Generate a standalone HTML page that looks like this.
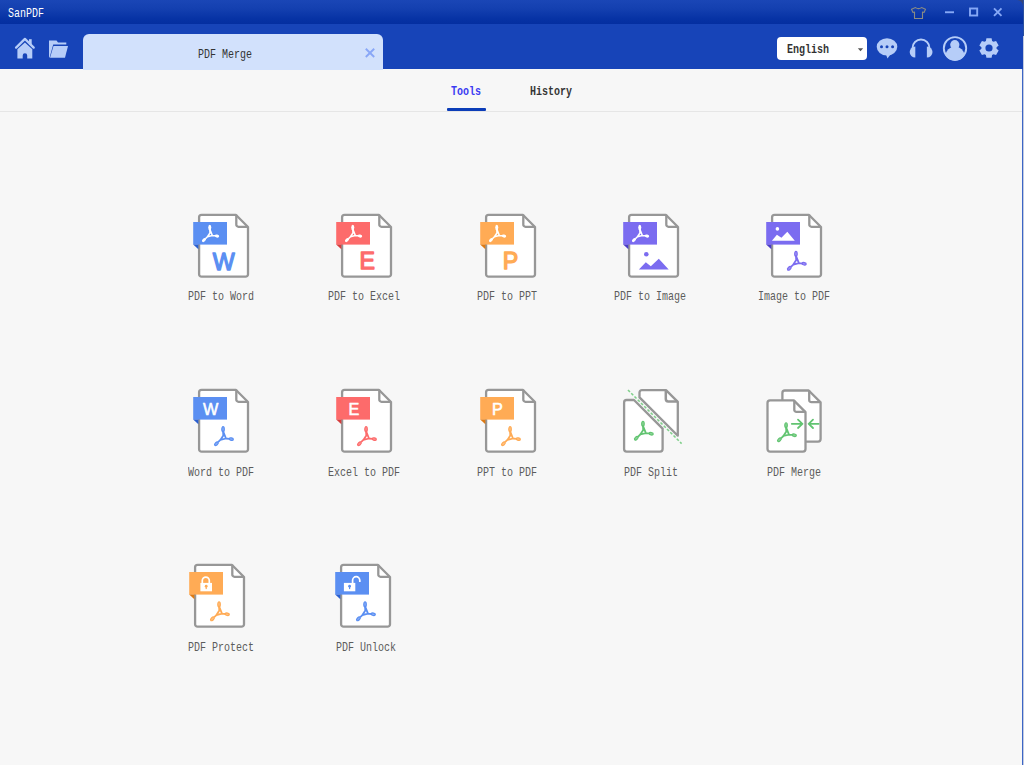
<!DOCTYPE html>
<html><head><meta charset="utf-8"><style>
html,body{margin:0;padding:0;}
body{width:1024px;height:765px;overflow:hidden;background:#f7f7f7;position:relative;font-family:"Liberation Mono",monospace;}
#corner{position:absolute;left:1012px;top:0;width:12px;height:12px;background:#34457a;}
#title{position:absolute;left:0;top:0;width:1023px;border-top-right-radius:6px;height:24px;background:linear-gradient(#1a46b6,#1440b0 35%,#0632a4 80%,#042ea0);}
#tool{position:absolute;left:0;top:24px;width:1024px;height:45px;background:#1744b8;}
.t{position:absolute;white-space:pre;font-size:13px;line-height:13px;transform:scaleX(0.77);transform-origin:0 0;}
.lbl{position:absolute;white-space:pre;font-size:13px;line-height:13px;transform:scaleX(0.77);transform-origin:0 0;color:#5c5c5c;}
.ic{position:absolute;overflow:visible;}
#tab{position:absolute;left:83px;top:34px;width:300px;height:36px;background:#d2e1fc;border-radius:6px 6px 0 0;}
#sel{position:absolute;left:777px;top:36.5px;width:90px;height:23.5px;background:#fff;border-radius:4px;}
#line{position:absolute;left:0;top:111px;width:1022px;height:1px;background:#e6e6e6;}
#uline{position:absolute;left:447px;top:108px;width:39px;height:3px;background:#0c3db8;border-radius:1px;}
#rb{position:absolute;left:1022px;top:69px;width:1px;height:696px;background:#3c66c6;}
#rb2{position:absolute;left:1023px;top:36px;width:1px;height:729px;background:#c3cbe0;}
#rb3{position:absolute;left:1023px;top:0;width:1px;height:36px;background:#2a4f9e;}
</style></head><body>
<div id="corner"></div><div id="title"></div>
<div id="tool"></div>
<div class="t" style="left:8px;top:7px;color:#fff">SanPDF</div>
<svg class="ic" style="left:0;top:0" width="1024" height="70" viewBox="0 0 1024 70">
 <g fill="#b6cdf8">
  <rect x="29" y="39.2" width="2.7" height="5.5"/>
  <path d="M16.1 47.6 L24.9 38.9 L33.7 47.6" stroke="#b6cdf8" stroke-width="2.3" fill="none" stroke-linecap="round" stroke-linejoin="round"/>
  <path d="M17.4 49.3 L24.9 42.5 L32.3 49.3 V58.5 H27.2 V55.4 A2.25 2.25 0 0 0 22.7 55.4 V58.5 H17.4 Z"/>
  <path d="M49 40.5 H56.5 L58 42.5 H66.3 V44.6 H53.2 L49.6 57.5 H49 Z"/>
  <path d="M53.5 45.9 H68 L65 57.7 H50 Z"/>
 </g>
 <path d="M911.5 9.2 L915.5 7.6 Q918.5 9.6 921.5 7.6 L925.5 9.2 L924 12.5 L922.5 12 V18.5 H914.5 V12 L913 12.5 Z" fill="none" stroke="#8a8c84" stroke-width="1.1" stroke-linejoin="round"/>
 <rect x="945" y="11.3" width="9" height="1.9" fill="#86a8f6"/>
 <rect x="970" y="8.5" width="7.2" height="7" fill="none" stroke="#86a8f6" stroke-width="1.9"/>
 <path d="M994 8.3 L1001.5 15.8 M1001.5 8.3 L994 15.8" stroke="#86a8f6" stroke-width="1.9"/>
</svg>
<div id="tab"></div>
<div class="t" style="left:198px;top:48px;color:#333">PDF Merge</div>
<svg class="ic" style="left:0;top:0" width="1024" height="70" viewBox="0 0 1024 70">
 <path d="M365.8 48.8 L374.2 57 M374.2 48.8 L365.8 57" stroke="#89a7f7" stroke-width="1.9"/>
</svg>
<div id="sel"></div>
<div class="t" style="left:786.5px;top:43px;color:#1a1a1a;font-weight:bold;opacity:.9">English</div>
<svg class="ic" style="left:0;top:0" width="1024" height="70" viewBox="0 0 1024 70">
 <polygon points="857.8,48.2 863.2,48.2 860.5,51.3" fill="#555"/>
 <g fill="#b6cdf8">
  <ellipse cx="887" cy="46.8" rx="10.3" ry="8.6"/>
  <polygon points="885.5,53 891.5,53 887.5,58.5"/>
  <circle cx="881.5" cy="46.8" r="1.5" fill="#1744b8"/><circle cx="887" cy="46.8" r="1.5" fill="#1744b8"/><circle cx="892.6" cy="46.8" r="1.5" fill="#1744b8"/>
  <path d="M912.5 53 V48 A8.5 8.5 0 0 1 929.5 48 V53" fill="none" stroke="#b6cdf8" stroke-width="1.8"/>
  <path d="M915.3 46.6 V57.6 A5.6 5.5 0 0 1 915.3 46.6 Z"/>
  <path d="M926.9 46.6 V57.6 A5.6 5.5 0 0 0 926.9 46.6 Z"/>
  <circle cx="955" cy="48.3" r="11.2" fill="none" stroke="#b6cdf8" stroke-width="1.9"/>
  <circle cx="954.8" cy="44.7" r="4.6"/>
  <path d="M945.5 55.5 A9.5 9 0 0 1 964.5 55.5 A11 11 0 0 1 945.5 55.5 Z"/>
 </g>
</svg>
<svg class="ic" style="left:979px;top:38px" width="20" height="20" viewBox="-10 -10 20 20">
 <path fill="#b6cdf8" fill-rule="evenodd" d="M7.56 0.79 L9.66 2.59 L7.07 7.07 L4.47 6.15 L3.09 6.94 L2.59 9.66 L-2.59 9.66 L-3.09 6.94 L-4.47 6.15 L-7.07 7.07 L-9.66 2.59 L-7.56 0.79 L-7.56 -0.79 L-9.66 -2.59 L-7.07 -7.07 L-4.47 -6.15 L-3.09 -6.94 L-2.59 -9.66 L2.59 -9.66 L3.09 -6.94 L4.47 -6.15 L7.07 -7.07 L9.66 -2.59 L7.56 -0.79 Z M3.6 0 A3.6 3.6 0 1 0 -3.6 0 A3.6 3.6 0 1 0 3.6 0 Z"/>
</svg>
<div class="t" style="left:451px;top:85px;color:#3b3bf2;font-weight:bold">Tools</div>
<div class="t" style="left:530px;top:85px;color:#111;font-weight:bold;opacity:.85">History</div>
<div id="line"></div>
<div id="uline"></div>
<svg class="ic" style="left:192px;top:212px" width="62" height="68" viewBox="0 0 62 68"><path d="M9.6 2.8 H43.8 L56 15.0 V62.2 A2.5 2.5 0 0 1 53.5 64.7 H9.6 A2.5 2.5 0 0 1 7.1 62.2 V5.3 A2.5 2.5 0 0 1 9.6 2.8 Z" fill="#fff" stroke="#979797" stroke-width="2.3" stroke-linejoin="round"/><path d="M44.3 2.8 V12.4 A2.2 2.2 0 0 0 46.5 14.8 H56" fill="none" stroke="#979797" stroke-width="2.3"/><rect x="1.2" y="10" width="33.8" height="22.6" fill="#5b8ff2"/><polygon points="1.2,32.6 6.4,32.6 6.4,37.2" fill="#2a5fd0"/><g transform="translate(9.9 12.8) scale(0.87)" fill="#fff" stroke="#fff" stroke-width="0"><ellipse cx="9.05" cy="3" rx="1.75" ry="3.1"/><ellipse cx="17.3" cy="12.9" rx="2.6" ry="1.75" transform="rotate(12 17.3 12.9)"/><ellipse cx="2.4" cy="17.5" rx="2.8" ry="1.75" transform="rotate(-45 2.4 17.5)"/><path d="M9.05 5 L9.3 9.2 L6.4 13.7 L12 12.3 Z M12 12.3 L15.3 12.6 M6.4 13.7 L4 16" stroke-width="1.8" fill="none" stroke-linejoin="round"/></g><text x="31.6" y="57.550000000000004" font-family="Liberation Sans" font-size="23.2" fill="#5b8ff2" stroke="#5b8ff2" stroke-width="1.30" stroke-linejoin="round" text-anchor="middle">W</text></svg><svg class="ic" style="left:335px;top:212px" width="62" height="68" viewBox="0 0 62 68"><path d="M9.6 2.8 H43.8 L56 15.0 V62.2 A2.5 2.5 0 0 1 53.5 64.7 H9.6 A2.5 2.5 0 0 1 7.1 62.2 V5.3 A2.5 2.5 0 0 1 9.6 2.8 Z" fill="#fff" stroke="#979797" stroke-width="2.3" stroke-linejoin="round"/><path d="M44.3 2.8 V12.4 A2.2 2.2 0 0 0 46.5 14.8 H56" fill="none" stroke="#979797" stroke-width="2.3"/><rect x="1.2" y="10" width="33.8" height="22.6" fill="#fd6b6b"/><polygon points="1.2,32.6 6.4,32.6 6.4,37.2" fill="#d63c3c"/><g transform="translate(9.9 12.8) scale(0.87)" fill="#fff" stroke="#fff" stroke-width="0"><ellipse cx="9.05" cy="3" rx="1.75" ry="3.1"/><ellipse cx="17.3" cy="12.9" rx="2.6" ry="1.75" transform="rotate(12 17.3 12.9)"/><ellipse cx="2.4" cy="17.5" rx="2.8" ry="1.75" transform="rotate(-45 2.4 17.5)"/><path d="M9.05 5 L9.3 9.2 L6.4 13.7 L12 12.3 Z M12 12.3 L15.3 12.6 M6.4 13.7 L4 16" stroke-width="1.8" fill="none" stroke-linejoin="round"/></g><text x="32.2" y="57.15" font-family="Liberation Sans" font-size="23.2" fill="#fd6b6b" stroke="#fd6b6b" stroke-width="1.30" stroke-linejoin="round" text-anchor="middle">E</text></svg><svg class="ic" style="left:479px;top:212px" width="62" height="68" viewBox="0 0 62 68"><path d="M9.6 2.8 H43.8 L56 15.0 V62.2 A2.5 2.5 0 0 1 53.5 64.7 H9.6 A2.5 2.5 0 0 1 7.1 62.2 V5.3 A2.5 2.5 0 0 1 9.6 2.8 Z" fill="#fff" stroke="#979797" stroke-width="2.3" stroke-linejoin="round"/><path d="M44.3 2.8 V12.4 A2.2 2.2 0 0 0 46.5 14.8 H56" fill="none" stroke="#979797" stroke-width="2.3"/><rect x="1.2" y="10" width="33.8" height="22.6" fill="#ffab55"/><polygon points="1.2,32.6 6.4,32.6 6.4,37.2" fill="#df7a12"/><g transform="translate(9.9 12.8) scale(0.87)" fill="#fff" stroke="#fff" stroke-width="0"><ellipse cx="9.05" cy="3" rx="1.75" ry="3.1"/><ellipse cx="17.3" cy="12.9" rx="2.6" ry="1.75" transform="rotate(12 17.3 12.9)"/><ellipse cx="2.4" cy="17.5" rx="2.8" ry="1.75" transform="rotate(-45 2.4 17.5)"/><path d="M9.05 5 L9.3 9.2 L6.4 13.7 L12 12.3 Z M12 12.3 L15.3 12.6 M6.4 13.7 L4 16" stroke-width="1.8" fill="none" stroke-linejoin="round"/></g><text x="31.6" y="57.15" font-family="Liberation Sans" font-size="23.2" fill="#ffab55" stroke="#ffab55" stroke-width="1.30" stroke-linejoin="round" text-anchor="middle">P</text></svg><svg class="ic" style="left:622px;top:212px" width="62" height="68" viewBox="0 0 62 68"><path d="M9.6 2.8 H43.8 L56 15.0 V62.2 A2.5 2.5 0 0 1 53.5 64.7 H9.6 A2.5 2.5 0 0 1 7.1 62.2 V5.3 A2.5 2.5 0 0 1 9.6 2.8 Z" fill="#fff" stroke="#979797" stroke-width="2.3" stroke-linejoin="round"/><path d="M44.3 2.8 V12.4 A2.2 2.2 0 0 0 46.5 14.8 H56" fill="none" stroke="#979797" stroke-width="2.3"/><rect x="1.2" y="10" width="33.8" height="22.6" fill="#7b6cf0"/><polygon points="1.2,32.6 6.4,32.6 6.4,37.2" fill="#4a3bc6"/><g transform="translate(9.9 12.8) scale(0.87)" fill="#fff" stroke="#fff" stroke-width="0"><ellipse cx="9.05" cy="3" rx="1.75" ry="3.1"/><ellipse cx="17.3" cy="12.9" rx="2.6" ry="1.75" transform="rotate(12 17.3 12.9)"/><ellipse cx="2.4" cy="17.5" rx="2.8" ry="1.75" transform="rotate(-45 2.4 17.5)"/><path d="M9.05 5 L9.3 9.2 L6.4 13.7 L12 12.3 Z M12 12.3 L15.3 12.6 M6.4 13.7 L4 16" stroke-width="1.8" fill="none" stroke-linejoin="round"/></g><polygon points="16.9,57.6 23.8,50.2 28.8,54.2 36.8,46.7 46.7,57.6" fill="#7b6cf0"/><circle cx="24.3" cy="42.2" r="2.3" fill="#7b6cf0"/></svg><svg class="ic" style="left:765px;top:212px" width="62" height="68" viewBox="0 0 62 68"><path d="M9.6 2.8 H43.8 L56 15.0 V62.2 A2.5 2.5 0 0 1 53.5 64.7 H9.6 A2.5 2.5 0 0 1 7.1 62.2 V5.3 A2.5 2.5 0 0 1 9.6 2.8 Z" fill="#fff" stroke="#979797" stroke-width="2.3" stroke-linejoin="round"/><path d="M44.3 2.8 V12.4 A2.2 2.2 0 0 0 46.5 14.8 H56" fill="none" stroke="#979797" stroke-width="2.3"/><rect x="1.2" y="10" width="33.8" height="22.6" fill="#7b6cf0"/><polygon points="1.2,32.6 6.4,32.6 6.4,37.2" fill="#4a3bc6"/><polygon points="6.9,28.8 11.9,22.8 16.4,25.8 22.3,19.7 29.8,28.8" fill="#fff"/><circle cx="12.4" cy="16.9" r="1.8" fill="#fff"/><g transform="translate(21.9 38.9) scale(1.0)" fill="#7b6cf0" stroke="#7b6cf0" stroke-width="0"><ellipse cx="9.05" cy="3" rx="1.25" ry="2.55" fill-opacity="0.72" stroke-width="1.2"/><ellipse cx="17.3" cy="12.9" rx="2.05" ry="1.25" transform="rotate(12 17.3 12.9)" fill-opacity="0.72" stroke-width="1.2"/><ellipse cx="2.4" cy="17.5" rx="2.25" ry="1.25" transform="rotate(-45 2.4 17.5)" fill-opacity="0.72" stroke-width="1.2"/><path d="M9.05 5 L9.3 9.2 L6.4 13.7 L12 12.3 Z M12 12.3 L15.3 12.6 M6.4 13.7 L4 16" stroke-width="1.8" fill="none" stroke-linejoin="round"/></g></svg><svg class="ic" style="left:192px;top:387px" width="62" height="68" viewBox="0 0 62 68"><path d="M9.6 2.8 H43.8 L56 15.0 V62.2 A2.5 2.5 0 0 1 53.5 64.7 H9.6 A2.5 2.5 0 0 1 7.1 62.2 V5.3 A2.5 2.5 0 0 1 9.6 2.8 Z" fill="#fff" stroke="#979797" stroke-width="2.3" stroke-linejoin="round"/><path d="M44.3 2.8 V12.4 A2.2 2.2 0 0 0 46.5 14.8 H56" fill="none" stroke="#979797" stroke-width="2.3"/><rect x="1.2" y="10" width="33.8" height="22.6" fill="#5b8ff2"/><polygon points="1.2,32.6 6.4,32.6 6.4,37.2" fill="#2a5fd0"/><text x="18.6" y="27.814400000000003" font-family="Liberation Sans" font-size="16.2288" fill="#fff" stroke="#fff" stroke-width="0.57" stroke-linejoin="round" text-anchor="middle">W</text><g transform="translate(22 39.2) scale(1.0)" fill="#5b8ff2" stroke="#5b8ff2" stroke-width="0"><ellipse cx="9.05" cy="3" rx="1.25" ry="2.55" fill-opacity="0.72" stroke-width="1.2"/><ellipse cx="17.3" cy="12.9" rx="2.05" ry="1.25" transform="rotate(12 17.3 12.9)" fill-opacity="0.72" stroke-width="1.2"/><ellipse cx="2.4" cy="17.5" rx="2.25" ry="1.25" transform="rotate(-45 2.4 17.5)" fill-opacity="0.72" stroke-width="1.2"/><path d="M9.05 5 L9.3 9.2 L6.4 13.7 L12 12.3 Z M12 12.3 L15.3 12.6 M6.4 13.7 L4 16" stroke-width="1.8" fill="none" stroke-linejoin="round"/></g></svg><svg class="ic" style="left:335px;top:387px" width="62" height="68" viewBox="0 0 62 68"><path d="M9.6 2.8 H43.8 L56 15.0 V62.2 A2.5 2.5 0 0 1 53.5 64.7 H9.6 A2.5 2.5 0 0 1 7.1 62.2 V5.3 A2.5 2.5 0 0 1 9.6 2.8 Z" fill="#fff" stroke="#979797" stroke-width="2.3" stroke-linejoin="round"/><path d="M44.3 2.8 V12.4 A2.2 2.2 0 0 0 46.5 14.8 H56" fill="none" stroke="#979797" stroke-width="2.3"/><rect x="1.2" y="10" width="33.8" height="22.6" fill="#fd6b6b"/><polygon points="1.2,32.6 6.4,32.6 6.4,37.2" fill="#d63c3c"/><text x="18.9" y="27.814400000000003" font-family="Liberation Sans" font-size="16.2288" fill="#fff" stroke="#fff" stroke-width="0.57" stroke-linejoin="round" text-anchor="middle">E</text><g transform="translate(22 39.2) scale(1.0)" fill="#fd6b6b" stroke="#fd6b6b" stroke-width="0"><ellipse cx="9.05" cy="3" rx="1.25" ry="2.55" fill-opacity="0.72" stroke-width="1.2"/><ellipse cx="17.3" cy="12.9" rx="2.05" ry="1.25" transform="rotate(12 17.3 12.9)" fill-opacity="0.72" stroke-width="1.2"/><ellipse cx="2.4" cy="17.5" rx="2.25" ry="1.25" transform="rotate(-45 2.4 17.5)" fill-opacity="0.72" stroke-width="1.2"/><path d="M9.05 5 L9.3 9.2 L6.4 13.7 L12 12.3 Z M12 12.3 L15.3 12.6 M6.4 13.7 L4 16" stroke-width="1.8" fill="none" stroke-linejoin="round"/></g></svg><svg class="ic" style="left:479px;top:387px" width="62" height="68" viewBox="0 0 62 68"><path d="M9.6 2.8 H43.8 L56 15.0 V62.2 A2.5 2.5 0 0 1 53.5 64.7 H9.6 A2.5 2.5 0 0 1 7.1 62.2 V5.3 A2.5 2.5 0 0 1 9.6 2.8 Z" fill="#fff" stroke="#979797" stroke-width="2.3" stroke-linejoin="round"/><path d="M44.3 2.8 V12.4 A2.2 2.2 0 0 0 46.5 14.8 H56" fill="none" stroke="#979797" stroke-width="2.3"/><rect x="1.2" y="10" width="33.8" height="22.6" fill="#ffab55"/><polygon points="1.2,32.6 6.4,32.6 6.4,37.2" fill="#df7a12"/><text x="18.4" y="27.814400000000003" font-family="Liberation Sans" font-size="16.2288" fill="#fff" stroke="#fff" stroke-width="0.57" stroke-linejoin="round" text-anchor="middle">P</text><g transform="translate(22 39.2) scale(1.0)" fill="#ffab55" stroke="#ffab55" stroke-width="0"><ellipse cx="9.05" cy="3" rx="1.25" ry="2.55" fill-opacity="0.72" stroke-width="1.2"/><ellipse cx="17.3" cy="12.9" rx="2.05" ry="1.25" transform="rotate(12 17.3 12.9)" fill-opacity="0.72" stroke-width="1.2"/><ellipse cx="2.4" cy="17.5" rx="2.25" ry="1.25" transform="rotate(-45 2.4 17.5)" fill-opacity="0.72" stroke-width="1.2"/><path d="M9.05 5 L9.3 9.2 L6.4 13.7 L12 12.3 Z M12 12.3 L15.3 12.6 M6.4 13.7 L4 16" stroke-width="1.8" fill="none" stroke-linejoin="round"/></g></svg><svg class="ic" style="left:622px;top:387px" width="62" height="68" viewBox="0 0 62 68"><path d="M20.0 3.1 H44 L55.8 14.9 V48.7 L17.5 10.4 V5.6 A2.5 2.5 0 0 1 20 3.1 Z" fill="#fff" stroke="#979797" stroke-width="2.3" stroke-linejoin="round"/><path d="M43.8 3.1 V12 A2.4 2.4 0 0 0 46.2 14.4 H55.8" fill="none" stroke="#979797" stroke-width="2.5"/><path d="M4.6 13 H12 L40.6 41.6 V62.1 A2.5 2.5 0 0 1 38.1 64.6 H4.6 A2.5 2.5 0 0 1 2.1 62.1 V15.5 A2.5 2.5 0 0 1 4.6 13 Z" fill="#fff" stroke="#979797" stroke-width="2.3" stroke-linejoin="round"/><path d="M6 3 L59.6 56.6" stroke="#80d08b" stroke-width="1.6" stroke-dasharray="2.8 1.8"/><g transform="translate(11.9 33.8) scale(1.0)" fill="#62c471" stroke="#62c471" stroke-width="0"><ellipse cx="9.05" cy="3" rx="1.25" ry="2.55" fill-opacity="0.72" stroke-width="1.2"/><ellipse cx="17.3" cy="12.9" rx="2.05" ry="1.25" transform="rotate(12 17.3 12.9)" fill-opacity="0.72" stroke-width="1.2"/><ellipse cx="2.4" cy="17.5" rx="2.25" ry="1.25" transform="rotate(-45 2.4 17.5)" fill-opacity="0.72" stroke-width="1.2"/><path d="M9.05 5 L9.3 9.2 L6.4 13.7 L12 12.3 Z M12 12.3 L15.3 12.6 M6.4 13.7 L4 16" stroke-width="1.8" fill="none" stroke-linejoin="round"/></g></svg><svg class="ic" style="left:765px;top:387px" width="62" height="68" viewBox="0 0 62 68"><path d="M19.9 3.5 H43.7 L55.6 15.4 V52.1 A2.5 2.5 0 0 1 53.1 54.6 H19.9 A2.5 2.5 0 0 1 17.4 52.1 V6.0 A2.5 2.5 0 0 1 19.9 3.5 Z" fill="#fff" stroke="#979797" stroke-width="2.3" stroke-linejoin="round"/><path d="M44.2 3.5 V12.799999999999999 A2.2 2.2 0 0 0 46.400000000000006 15.200000000000001 H55.6" fill="none" stroke="#979797" stroke-width="2.3"/><path d="M5.0 13.4 H28.8 L40.5 25.1 V62.099999999999994 A2.5 2.5 0 0 1 38.0 64.6 H5.0 A2.5 2.5 0 0 1 2.5 62.099999999999994 V15.9 A2.5 2.5 0 0 1 5.0 13.4 Z" fill="#fff" stroke="#979797" stroke-width="2.3" stroke-linejoin="round"/><path d="M29.3 13.4 V22.500000000000004 A2.2 2.2 0 0 0 31.5 24.900000000000002 H40.5" fill="none" stroke="#979797" stroke-width="2.3"/><path d="M26.8 36.8 H37.5 M33 32.6 L37.4 36.8 L33 41" stroke="#62c471" stroke-width="1.8" fill="none" stroke-linejoin="round" stroke-linecap="round"/><path d="M53.7 36.8 H43.6 M48 32.6 L43.7 36.8 L48 41" stroke="#62c471" stroke-width="1.8" fill="none" stroke-linejoin="round" stroke-linecap="round"/><g transform="translate(12 35.3) scale(1.0)" fill="#62c471" stroke="#62c471" stroke-width="0"><ellipse cx="9.05" cy="3" rx="1.25" ry="2.55" fill-opacity="0.72" stroke-width="1.2"/><ellipse cx="17.3" cy="12.9" rx="2.05" ry="1.25" transform="rotate(12 17.3 12.9)" fill-opacity="0.72" stroke-width="1.2"/><ellipse cx="2.4" cy="17.5" rx="2.25" ry="1.25" transform="rotate(-45 2.4 17.5)" fill-opacity="0.72" stroke-width="1.2"/><path d="M9.05 5 L9.3 9.2 L6.4 13.7 L12 12.3 Z M12 12.3 L15.3 12.6 M6.4 13.7 L4 16" stroke-width="1.8" fill="none" stroke-linejoin="round"/></g></svg><svg class="ic" style="left:188px;top:562px" width="62" height="68" viewBox="0 0 62 68"><path d="M9.6 2.8 H43.8 L56 15.0 V62.2 A2.5 2.5 0 0 1 53.5 64.7 H9.6 A2.5 2.5 0 0 1 7.1 62.2 V5.3 A2.5 2.5 0 0 1 9.6 2.8 Z" fill="#fff" stroke="#979797" stroke-width="2.3" stroke-linejoin="round"/><path d="M44.3 2.8 V12.4 A2.2 2.2 0 0 0 46.5 14.8 H56" fill="none" stroke="#979797" stroke-width="2.3"/><rect x="1.2" y="10" width="33.8" height="22.6" fill="#ffab55"/><polygon points="1.2,32.6 6.4,32.6 6.4,37.2" fill="#df7a12"/><path d="M14.3 21 V18.6 A3.5 3.5 0 0 1 21.3 18.6 V21" stroke="#fff" stroke-width="1.7" fill="none"/><rect x="12.4" y="20.9" width="11.6" height="8.4" fill="#fff"/><circle cx="18.2" cy="24.2" r="1.4" fill="#ffab55"/><rect x="17.6" y="24.5" width="1.2" height="2.6" fill="#ffab55"/><g transform="translate(22 39.4) scale(1.0)" fill="#ffab55" stroke="#ffab55" stroke-width="0"><ellipse cx="9.05" cy="3" rx="1.25" ry="2.55" fill-opacity="0.72" stroke-width="1.2"/><ellipse cx="17.3" cy="12.9" rx="2.05" ry="1.25" transform="rotate(12 17.3 12.9)" fill-opacity="0.72" stroke-width="1.2"/><ellipse cx="2.4" cy="17.5" rx="2.25" ry="1.25" transform="rotate(-45 2.4 17.5)" fill-opacity="0.72" stroke-width="1.2"/><path d="M9.05 5 L9.3 9.2 L6.4 13.7 L12 12.3 Z M12 12.3 L15.3 12.6 M6.4 13.7 L4 16" stroke-width="1.8" fill="none" stroke-linejoin="round"/></g></svg><svg class="ic" style="left:334px;top:562px" width="62" height="68" viewBox="0 0 62 68"><path d="M9.6 2.8 H43.8 L56 15.0 V62.2 A2.5 2.5 0 0 1 53.5 64.7 H9.6 A2.5 2.5 0 0 1 7.1 62.2 V5.3 A2.5 2.5 0 0 1 9.6 2.8 Z" fill="#fff" stroke="#979797" stroke-width="2.3" stroke-linejoin="round"/><path d="M44.3 2.8 V12.4 A2.2 2.2 0 0 0 46.5 14.8 H56" fill="none" stroke="#979797" stroke-width="2.3"/><rect x="1.2" y="10" width="33.8" height="22.6" fill="#5b8ff2"/><polygon points="1.2,32.6 6.4,32.6 6.4,37.2" fill="#2a5fd0"/><path d="M18.6 21 V18.3 A3.6 3.6 0 0 1 25.8 18.3 V20" stroke="#fff" stroke-width="1.7" fill="none"/><rect x="9.9" y="20.9" width="11.4" height="8.4" fill="#fff"/><circle cx="15.6" cy="24.2" r="1.4" fill="#5b8ff2"/><rect x="15" y="24.5" width="1.2" height="2.6" fill="#5b8ff2"/><g transform="translate(22 39.4) scale(1.0)" fill="#5b8ff2" stroke="#5b8ff2" stroke-width="0"><ellipse cx="9.05" cy="3" rx="1.25" ry="2.55" fill-opacity="0.72" stroke-width="1.2"/><ellipse cx="17.3" cy="12.9" rx="2.05" ry="1.25" transform="rotate(12 17.3 12.9)" fill-opacity="0.72" stroke-width="1.2"/><ellipse cx="2.4" cy="17.5" rx="2.25" ry="1.25" transform="rotate(-45 2.4 17.5)" fill-opacity="0.72" stroke-width="1.2"/><path d="M9.05 5 L9.3 9.2 L6.4 13.7 L12 12.3 Z M12 12.3 L15.3 12.6 M6.4 13.7 L4 16" stroke-width="1.8" fill="none" stroke-linejoin="round"/></g></svg>
<div class="lbl" style="left:188.2px;top:290px">PDF to Word</div><div class="lbl" style="left:327.8px;top:290px">PDF to Excel</div><div class="lbl" style="left:477.3px;top:290px">PDF to PPT</div><div class="lbl" style="left:614.3px;top:290px">PDF to Image</div><div class="lbl" style="left:757.6px;top:290px">Image to PDF</div><div class="lbl" style="left:188.2px;top:466px">Word to PDF</div><div class="lbl" style="left:328.1px;top:466px">Excel to PDF</div><div class="lbl" style="left:477.3px;top:466px">PPT to PDF</div><div class="lbl" style="left:623.5px;top:466px">PDF Split</div><div class="lbl" style="left:766.5px;top:466px">PDF Merge</div><div class="lbl" style="left:188.0px;top:641px">PDF Protect</div><div class="lbl" style="left:336.2px;top:641px">PDF Unlock</div>
<div id="rb"></div><div id="rb2"></div><div id="rb3"></div>
</body></html>
